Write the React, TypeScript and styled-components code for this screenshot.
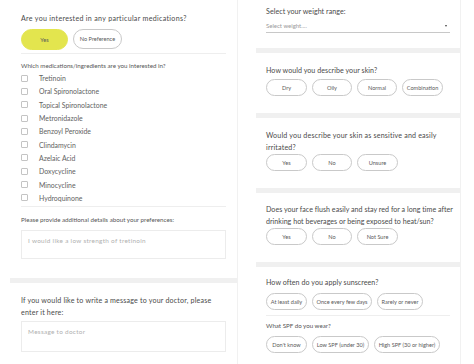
import React from "react";
import styled, { createGlobalStyle } from "styled-components";

const Global = createGlobalStyle`
  html, body { margin: 0; padding: 0; background: #ffffff; }
  body { font-family: Lato, "Open Sans", "Liberation Sans", sans-serif; color: #4a4a4a; }
  * { box-sizing: border-box; }
`;

const Page = styled.div`
  display: flex;
  gap: 18px;
  padding-left: 10px;
  width: 474px;
  height: 364px;
  overflow: hidden;
`;

const Column = styled.div<{ $w: number }>`
  width: ${(p) => p.$w}px;
  display: flex;
  flex-direction: column;
  border-right: 1px solid #f1f1f1;
`;

const Card = styled.div<{ $pt: number; $pb: number; $pl: number; $pr?: number }>`
  padding: ${(p) => p.$pt}px ${(p) => p.$pr ?? p.$pl}px ${(p) => p.$pb}px ${(p) => p.$pl}px;
  display: flex;
  flex-direction: column;
`;

const Bar = styled.div`
  height: 5px;
  background: #f0f0f0;
`;

const Heading = styled.div<{ $mb?: number; $ls?: number }>`
  font-size: 7.1px;
  line-height: 11.5px;
  color: #4a4a4a;
  letter-spacing: ${(p) => p.$ls ?? 0.18}px;
  margin-bottom: ${(p) => p.$mb ?? 3}px;
`;

const SubLabel = styled.div<{ $mt?: number; $mb?: number }>`
  font-size: 6.2px;
  line-height: 10px;
  color: #555;
  margin-top: ${(p) => p.$mt ?? 0}px;
  margin-bottom: ${(p) => p.$mb ?? 0}px;
`;

const Row = styled.div`
  display: flex;
  gap: 5px;
`;

const Pill = styled.div<{ $w: number; $h?: number; $active?: boolean }>`
  width: ${(p) => p.$w}px;
  height: ${(p) => p.$h ?? 17}px;
  border-radius: 999px;
  border: 1px solid ${(p) => (p.$active ? "#e3e54e" : "#c9c9c9")};
  background: ${(p) => (p.$active ? "#e3e54e" : "#fff")};
  display: flex;
  align-items: center;
  justify-content: center;
  font-size: 5.6px;
  color: #5a5a5a;
  white-space: nowrap;
`;

const Divider = styled.div<{ $mt: number; $mb: number }>`
  height: 1px;
  background: #eeeeee;
  margin-top: ${(p) => p.$mt}px;
  margin-bottom: ${(p) => p.$mb}px;
`;

const CheckRow = styled.label`
  display: flex;
  align-items: center;
  height: 13.3px;
  font-size: 6.9px;
  color: #626262;
`;

const Box = styled.span`
  width: 7px;
  height: 7px;
  border: 1px solid #c4c4c4;
  border-radius: 1px;
  margin-right: 11px;
`;

const TextBox = styled.div<{ $h: number }>`
  height: ${(p) => p.$h}px;
  border: 1px solid #ececec;
  padding: 6px 6px;
  font-size: 6.4px;
  letter-spacing: 0.3px;
  color: #b0b0b0;
`;

const Select = styled.div`
  display: flex;
  align-items: center;
  justify-content: space-between;
  height: 13px;
  border-bottom: 1.5px solid #c8c8c8;
  font-size: 6px;
  color: #9a9a9a;
  padding-right: 3px;
`;

const Arrow = styled.span`
  width: 0;
  height: 0;
  border-left: 1.5px solid transparent;
  border-right: 1.5px solid transparent;
  border-top: 2px solid #444;
`;

const meds = [
  "Tretinoin",
  "Oral Spironolactone",
  "Topical Spironolactone",
  "Metronidazole",
  "Benzoyl Peroxide",
  "Clindamycin",
  "Azelaic Acid",
  "Doxycycline",
  "Minocycline",
  "Hydroquinone",
];

export default function App() {
  return (
    <>
      <Global />
      <Page>
        <Column $w={228}>
          <Card $pt={13} $pb={19} $pl={11}>
            <Heading $mb={4} $ls={0.3}>Are you interested in any particular medications?</Heading>
            <Row>
              <Pill $w={47} $h={21} $active>Yes</Pill>
              <Pill $w={49} $h={20}>No Preference</Pill>
            </Row>
            <Divider $mt={3} $mb={7} />
            <SubLabel $mb={1}>Which medications/ingredients are you interested in?</SubLabel>
            {meds.map((m) => (
              <CheckRow key={m}>
                <Box />
                {m}
              </CheckRow>
            ))}
            <Divider $mt={2} $mb={8} />
            <SubLabel $mb={5}>Please provide additional details about your preferences:</SubLabel>
            <TextBox $h={29}>I would like a low strength of tretinoin</TextBox>
          </Card>
          <Bar />
          <Card $pt={12} $pb={10} $pl={11}>
            <Heading $mb={3}>
              If you would like to write a message to your doctor, please enter it here:
            </Heading>
            <TextBox $h={31}>Message to doctor</TextBox>
          </Card>
        </Column>
        <Column $w={205}>
          <Card $pt={6} $pb={15} $pl={10}>
            <Heading $mb={2} $ls={0.05}>Select your weight range:</Heading>
            <Select>
              <span>Select weight....</span>
              <Arrow />
            </Select>
          </Card>
          <Bar />
          <Card $pt={12} $pb={17} $pl={10}>
            <Heading $ls={0.05}>How would you describe your skin?</Heading>
            <Row>
              <Pill $w={41}>Dry</Pill>
              <Pill $w={40}>Oily</Pill>
              <Pill $w={40}>Normal</Pill>
              <Pill $w={41}>Combination</Pill>
            </Row>
          </Card>
          <Bar />
          <Card $pt={12} $pb={17} $pl={10} $pr={4}>
            <Heading $mb={1}>Would you describe your skin as sensitive and easily irritated?</Heading>
            <Row>
              <Pill $w={41}>Yes</Pill>
              <Pill $w={40}>No</Pill>
              <Pill $w={41}>Unsure</Pill>
            </Row>
          </Card>
          <Bar />
          <Card $pt={11} $pb={17} $pl={10} $pr={2}>
            <Heading $mb={1} $ls={0.02}>
              Does your face flush easily and stay red for a long time after drinking hot beverages or being exposed to heat/sun?
            </Heading>
            <Row>
              <Pill $w={41}>Yes</Pill>
              <Pill $w={40}>No</Pill>
              <Pill $w={41}>Not Sure</Pill>
            </Row>
          </Card>
          <Bar />
          <Card $pt={10} $pb={10} $pl={10}>
            <Heading $mb={4} $ls={0.05}>How often do you apply sunscreen?</Heading>
            <Row>
              <Pill $w={41}>At least daily</Pill>
              <Pill $w={60}>Once every few days</Pill>
              <Pill $w={46}>Rarely or never</Pill>
            </Row>
            <Divider $mt={5} $mb={5} />
            <SubLabel $mb={5}>What SPF do you wear?</SubLabel>
            <Row>
              <Pill $w={41}>Don't know</Pill>
              <Pill $w={57}>Low SPF (under 30)</Pill>
              <Pill $w={66}>High SPF (30 or higher)</Pill>
            </Row>
          </Card>
        </Column>
      </Page>
    </>
  );
}
